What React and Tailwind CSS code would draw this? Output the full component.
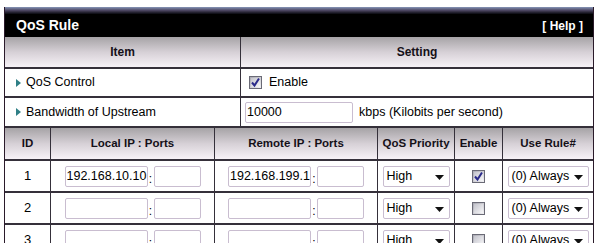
import React from 'react';

const font = { fontFamily: '"Liberation Sans", Arial, sans-serif' };

function Bullet() {
  return (
    <svg width="5" height="8" viewBox="0 0 5 8" className="mr-[5px] shrink-0">
      <path d="M0 0 L5 4 L0 8 Z" fill="#2f7f86" />
    </svg>
  );
}

function Check({ checked }) {
  return (
    <span className="relative inline-flex w-[13px] h-[13px] border border-[#6a6a76] bg-gradient-to-br from-[#a9a9b2] to-[#f1f1f4] items-center justify-center">
      <span className="absolute inset-[1px] bg-gradient-to-br from-[#c4c4cc] to-[#f6f6f8]" />
      {checked && (
        <svg width="11" height="11" viewBox="0 0 11 11" className="relative">
          <path d="M2 5.5 L4.5 8.5 L9 1.5" stroke="#2a2a8a" strokeWidth="2" fill="none" />
        </svg>
      )}
    </span>
  );
}

function TextBox({ w, value = '' }) {
  return (
    <input
      type="text"
      defaultValue={value}
      className="h-[21px] border border-[#c9bdd0] rounded-[2px] bg-white pl-[1px] pr-0 text-[12.5px] text-black outline-none"
      style={{ width: w, ...font }}
    />
  );
}

function Select({ w, value }) {
  return (
    <div className="relative h-[21px] border border-[#c9bdd0] rounded-[2px] bg-white flex items-center pl-[3px] text-[12.5px] text-black" style={{ width: w }}>
      <span>{value}</span>
      <svg width="9" height="5" viewBox="0 0 9 5" className="absolute right-[5px] top-[8px]">
        <path d="M0 0 H9 L4.5 5 Z" fill="#111" />
      </svg>
    </div>
  );
}

const headGrad = 'bg-gradient-to-b from-[#a6a3a6] via-[#d6d0d6] to-[#f7f2f7]';
const line = 'border-[#35303a]';

function RuleRow({ id, local = '', remote = '', checked }) {
  return (
    <div className={`grid grid-cols-[46px_164px_163px_77px_48px_1fr] h-[32px] border-b-2 ${line}`}>
      <div className={`border-r ${line} flex items-center justify-center text-[13px]`}>{id}</div>
      <div className={`border-r ${line} flex items-center justify-center`}>
        <TextBox w={83} value={local} />
        <span className="w-[6px] text-center text-[12px] pt-[6px]">:</span>
        <TextBox w={47} />
      </div>
      <div className={`border-r ${line} flex items-center justify-center`}>
        <TextBox w={83} value={remote} />
        <span className="w-[6px] text-center text-[12px] pt-[6px]">:</span>
        <TextBox w={47} />
      </div>
      <div className={`border-r ${line} flex items-center justify-center`}>
        <Select w={67} value="High" />
      </div>
      <div className={`border-r ${line} flex items-center justify-center`}>
        <Check checked={checked} />
      </div>
      <div className="flex items-center justify-center">
        <Select w={81} value="(0) Always" />
      </div>
    </div>
  );
}

export default function App() {
  return (
    <div className="bg-white w-[605px] h-[243px] overflow-hidden pt-[7px] pl-[4px] text-black" style={font}>
      <div className="w-[590px] border-x border-[#2a1a2a]">
        <div className="h-[7px] bg-gradient-to-b from-[#8796b8] via-[#4b4560] to-[#0a0a10]" />
        <div className="h-[23px] bg-black flex items-center justify-between pl-[11px] pr-[10px] text-white font-bold">
          <span className="text-[14px]">QoS Rule</span>
          <span className="text-[12px]">[ Help ]</span>
        </div>

        <div className={`flex h-[32px] border-b-2 ${line} ${headGrad} text-[12px] font-bold text-[#151018]`}>
          <div className={`w-[236px] border-r ${line} flex items-center justify-center`}>Item</div>
          <div className="flex-1 flex items-center justify-center">Setting</div>
        </div>

        <div className={`flex h-[29px] border-b-2 ${line} text-[12.5px]`}>
          <div className={`w-[236px] border-r ${line} flex items-center pl-[11px]`}>
            <Bullet />
            QoS Control
          </div>
          <div className="flex-1 flex items-center pl-[8px] gap-[7px]">
            <Check checked />
            <span>Enable</span>
          </div>
        </div>

        <div className={`flex h-[30px] border-b-2 ${line} text-[12.5px]`}>
          <div className={`w-[236px] border-r ${line} flex items-center pl-[11px]`}>
            <Bullet />
            Bandwidth of Upstream
          </div>
          <div className="flex-1 flex items-center pl-[4px] gap-[6px]">
            <TextBox w={108} value="10000" />
            <span>kbps (Kilobits per second)</span>
          </div>
        </div>

        <div className={`grid grid-cols-[46px_164px_163px_77px_48px_1fr] h-[33px] border-b-2 ${line} ${headGrad} text-[11.5px] font-bold text-[#151018]`}>
          <div className={`border-r ${line} flex items-center justify-center`}>ID</div>
          <div className={`border-r ${line} flex items-center justify-center`}>Local IP : Ports</div>
          <div className={`border-r ${line} flex items-center justify-center`}>Remote IP : Ports</div>
          <div className={`border-r ${line} flex items-center justify-center`}>QoS Priority</div>
          <div className={`border-r ${line} flex items-center justify-center`}>Enable</div>
          <div className="flex items-center justify-center">Use Rule#</div>
        </div>

        <RuleRow id="1" local="192.168.10.10" remote="192.168.199.1" checked />
        <RuleRow id="2" />
        <RuleRow id="3" />
      </div>
    </div>
  );
}
